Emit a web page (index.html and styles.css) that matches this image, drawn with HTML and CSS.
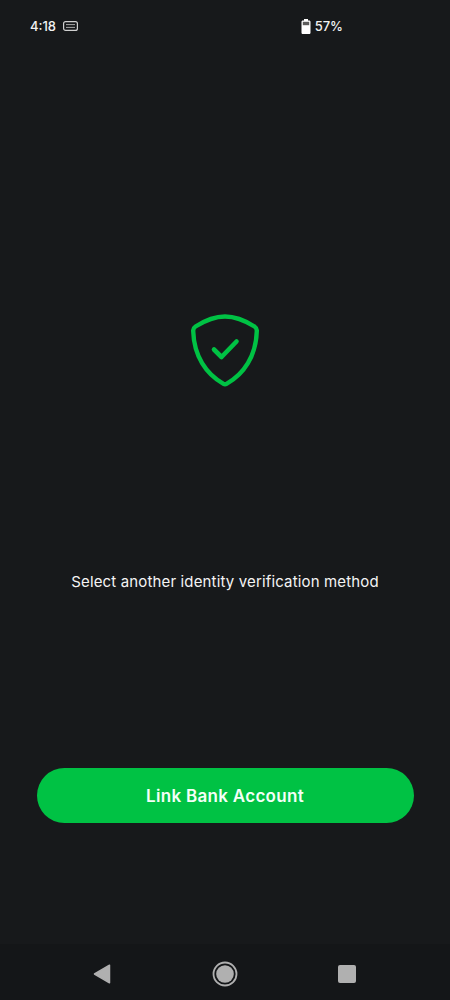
FILE: index.html
```html
<!DOCTYPE html>
<html lang="en">
<head>
    <meta charset="UTF-8">
    <meta name="viewport" content="width=device-width, initial-scale=1.0">
    <title>Verify identity</title>
    <link rel="stylesheet" href="styles.css">
</head>
<body>
    <div class="screen">
        <header class="status-bar">
            <div class="status-left">
                <span class="status-time">4:18</span>
                <svg class="status-card" width="15" height="10" viewBox="0 0 15 10" fill="none">
                    <rect x="0.6" y="0.6" width="13.8" height="8.8" rx="2" stroke="#d0d0d0" stroke-width="1.2"/>
                    <path d="M3 3.6h9M3 6.4h9" stroke="#a8a8a8" stroke-width="1"/>
                </svg>
            </div>
            <div class="status-right">
                <svg class="status-battery" width="10" height="15" viewBox="0 0 10 15">
                    <path d="M3 0h4v1.5h1.2c.7 0 1.3.6 1.3 1.3v10.9c0 .7-.6 1.3-1.3 1.3H1.800c-.7 0-1.300-.6-1.300-1.300V2.800c0-.7.6-1.300 1.300-1.300H3z" fill="#fff"/>
                    <rect x="1.800" y="2.800" width="6.400" height="3.400" fill="#5c5c5c"/>
                </svg>
                <span class="status-level">57%</span>
            </div>
        </header>

        <main class="content">
            <svg class="shield" width="68" height="73" viewBox="0 0 68 73" fill="none">
                <path d="M34 2.500C44 2.500 54 6.500 63.500 12.500C65 13.500 65.900 15 65.800 17C65 42 53 60 35.500 69.800C34.500 70.400 33.500 70.400 32.500 69.800C15 60 3 42 2.200 17C2.100 15 3 13.500 4.500 12.500C14 6.500 24 2.500 34 2.500Z" stroke="#00c244" stroke-width="4.400" stroke-linejoin="round"/>
                <path d="M23 35.500L30.500 43L45.500 27.500" stroke="#00c244" stroke-width="4.600" stroke-linecap="round" stroke-linejoin="round"/>
            </svg>
            <p class="message">Select another identity verification method</p>
            <button class="primary-btn">Link Bank Account</button>
        </main>

        <nav class="nav-bar">
            <svg width="18" height="20" viewBox="0 0 18 20">
                <path d="M16.500 1.200V18.800L1.500 10Z" fill="#b0b0b0" stroke="#b0b0b0" stroke-width="1.500" stroke-linejoin="round"/>
            </svg>
            <svg width="26" height="26" viewBox="0 0 26 26" fill="none">
                <circle cx="13" cy="13" r="11.500" stroke="#b0b0b0" stroke-width="1.800"/>
                <circle cx="13" cy="13" r="8.800" fill="#b0b0b0"/>
            </svg>
            <div class="nav-square"></div>
        </nav>
    </div>
</body>
</html>
```

FILE: styles.css
```css
* {
    margin: 0;
    padding: 0;
    box-sizing: border-box;
    font-family: 'Inter', sans-serif;
}

body {
    background: #17191b;
}

.screen {
    display: flex;
    flex-direction: column;
    width: 450px;
    height: 1000px;
    overflow: hidden;
    background: #17191b;
}

.status-bar {
    display: flex;
    justify-content: space-between;
    align-items: center;
    height: 52px;
    padding: 0 107px 0 30px;
    color: #f2f2f2;
    font-size: 13px;
    font-weight: 500;
}

.status-left,
.status-right {
    display: flex;
    align-items: center;
}

.status-left {
    gap: 7px;
}

.status-right {
    gap: 4px;
}

.content {
    flex: 1;
    display: flex;
    flex-direction: column;
    align-items: center;
    padding-top: 262px;
}

.shield {
    display: block;
}

.message {
    margin-top: 185px;
    color: #f4f4f4;
    font-size: 15px;
    line-height: 20px;
    letter-spacing: 0.15px;
}

.primary-btn {
    width: 377px;
    height: 55px;
    margin-top: 176px;
    padding-top: 1px;
    border: none;
    border-radius: 28px;
    background: #00c244;
    color: #f4fff7;
    font-size: 17px;
    font-weight: 600;
    letter-spacing: 0.3px;
}

.nav-bar {
    display: flex;
    justify-content: space-between;
    align-items: center;
    height: 56px;
    padding: 3px 94px 0 93px;
    background: #141618;
}

.nav-square {
    width: 18px;
    height: 18px;
    border-radius: 2px;
    background: #b0b0b0;
}
```
